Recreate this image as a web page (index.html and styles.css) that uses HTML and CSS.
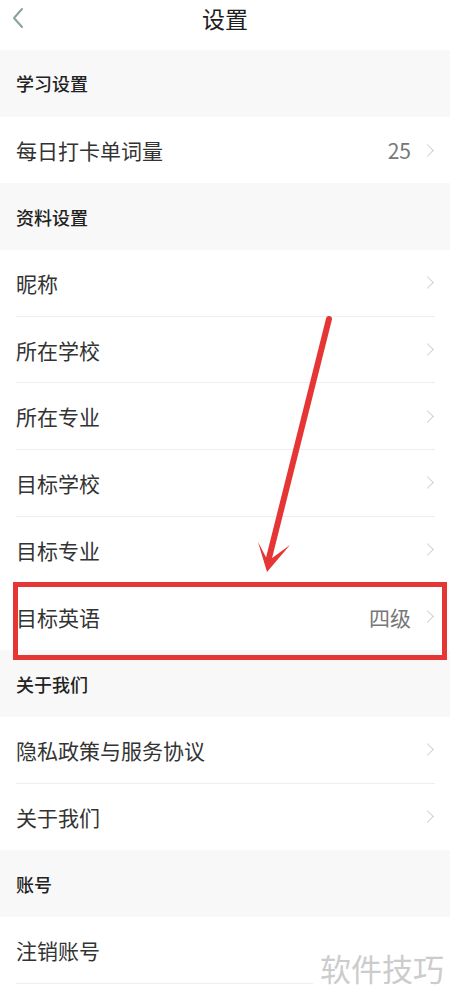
FILE: index.html
```html
<!DOCTYPE html>
<html lang="zh">
<head>
<meta charset="utf-8">
<link rel="stylesheet" href="styles.css">
</head>
<body>
<div class="page">
  <header class="nav">
    <svg class="back" width="14" height="22" viewBox="0 0 14 22"><path d="M11 2 L3 11 L11 20" fill="none" stroke="#86a597" stroke-width="2" stroke-linecap="round" stroke-linejoin="round"/></svg>
    <h1 class="title">设置</h1>
  </header>

  <div class="band">学习设置</div>
  <div class="row last"><span class="label">每日打卡单词量</span><span class="value">25</span><span class="chev"></span></div>

  <div class="band">资料设置</div>
  <div class="row"><span class="label">昵称</span><span class="chev"></span></div>
  <div class="row"><span class="label">所在学校</span><span class="chev"></span></div>
  <div class="row"><span class="label">所在专业</span><span class="chev"></span></div>
  <div class="row"><span class="label">目标学校</span><span class="chev"></span></div>
  <div class="row"><span class="label">目标专业</span><span class="chev"></span></div>
  <div class="row last"><span class="label">目标英语</span><span class="value">四级</span><span class="chev"></span></div>

  <div class="band">关于我们</div>
  <div class="row"><span class="label">隐私政策与服务协议</span><span class="chev"></span></div>
  <div class="row last"><span class="label">关于我们</span><span class="chev"></span></div>

  <div class="band">账号</div>
  <div class="row"><span class="label">注销账号</span></div>

  <div class="highlight"></div>
  <svg class="arrow" width="450" height="1001" viewBox="0 0 450 1001">
    <line x1="329" y1="319" x2="268" y2="562" stroke="#e53535" stroke-width="6" stroke-linecap="round"/>
    <polygon points="258,542 268,561 290,545 267,572" fill="#e53535"/>
  </svg>
  <div class="watermark">软件技巧</div>
</div>
</body>
</html>
```

FILE: styles.css
```css
* { box-sizing: border-box; }
html, body { margin: 0; padding: 0; background: #fff; }
body {
  font-family: "Noto Sans CJK SC", "Noto Sans", sans-serif;
  color: #333;
}
.page {
  position: relative;
  width: 450px;
  height: 1001px;
  overflow: hidden;
  background: #fff;
}
.nav {
  height: 50px;
  display: flex;
  align-items: center;
  justify-content: center;
  position: relative;
}
.back {
  position: absolute;
  left: 11px;
  top: 7px;
}
.title {
  margin: 0;
  font-size: 23px;
  font-weight: 400;
  color: #1e1e1e;
  line-height: 1;
  margin-top: -14px;
}
.band {
  height: 66.7px;
  background: #f8f8f8;
  display: flex;
  align-items: center;
  padding-left: 16px;
  font-size: 18px;
  font-weight: 500;
  color: #222;
}
.row {
  height: 66.7px;
  display: flex;
  align-items: center;
  margin-left: 16px;
  margin-right: 15px;
  border-bottom: 1px solid #eeeeee;
}
.row.last { border-bottom: none; }
.label {
  flex: 1;
  font-size: 21px;
  color: #333;
}
.value {
  font-size: 21px;
  color: #777;
  margin-right: 12px;
}
.chev {
  width: 9px;
  height: 9px;
  border-top: 1.5px solid #cfcfcf;
  border-right: 1.5px solid #cfcfcf;
  transform: rotate(45deg);
  margin-right: 3px;
}
.highlight {
  position: absolute;
  left: 13px;
  top: 582px;
  width: 434px;
  height: 78px;
  border: 5px solid #e53535;
}
.arrow {
  position: absolute;
  left: 0;
  top: 0;
  pointer-events: none;
}
.watermark {
  position: absolute;
  left: 313px;
  top: 945px;
  padding-left: 7px;
  width: 137px;
  height: 46px;
  background: #fff;
  font-size: 31px;
  line-height: 46px;
  color: #cccccc;
  white-space: nowrap;
}
```
